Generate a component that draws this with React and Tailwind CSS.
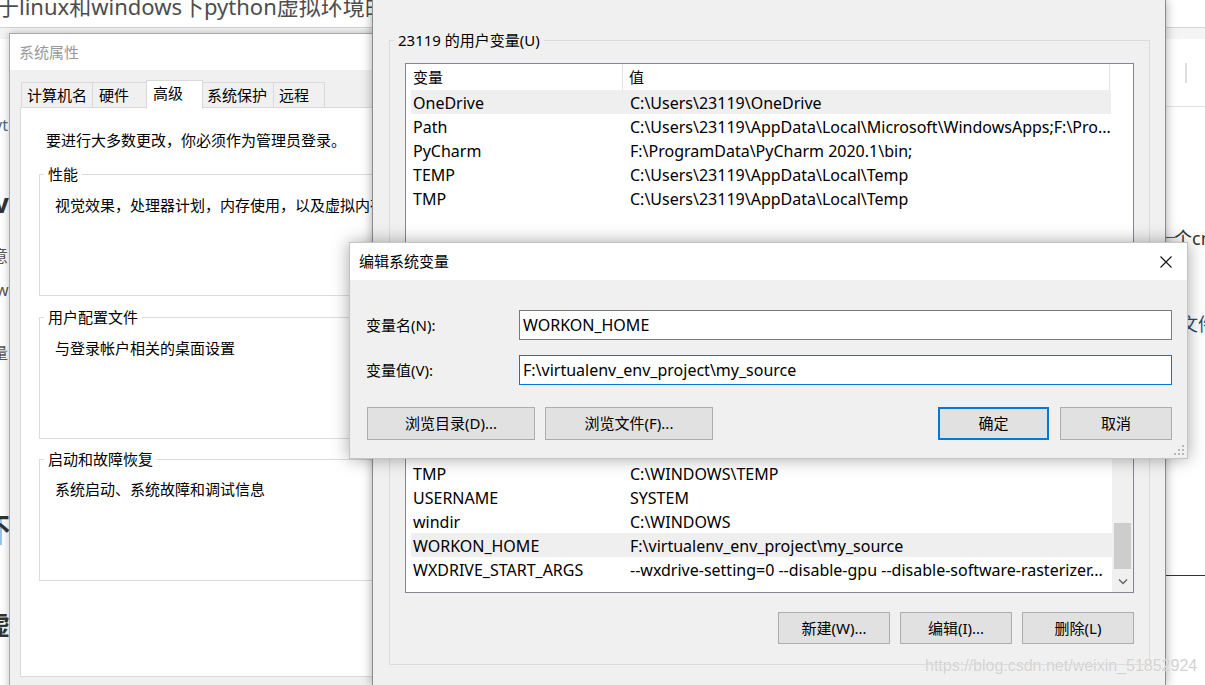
import React from "react";

const userRows = [
  ["OneDrive", "C:\\Users\\23119\\OneDrive", true],
  ["Path", "C:\\Users\\23119\\AppData\\Local\\Microsoft\\WindowsApps;F:\\Pro...", false],
  ["PyCharm", "F:\\ProgramData\\PyCharm 2020.1\\bin;", false],
  ["TEMP", "C:\\Users\\23119\\AppData\\Local\\Temp", false],
  ["TMP", "C:\\Users\\23119\\AppData\\Local\\Temp", false],
];

const sysRows = [
  ["PSModulePath", "%ProgramFiles%\\WindowsPowerShell\\Modules;...", false],
  ["TEMP", "C:\\WINDOWS\\TEMP", false],
  ["TMP", "C:\\WINDOWS\\TEMP", false],
  ["USERNAME", "SYSTEM", false],
  ["windir", "C:\\WINDOWS", false],
  ["WORKON_HOME", "F:\\virtualenv_env_project\\my_source", true],
  ["WXDRIVE_START_ARGS", "--wxdrive-setting=0 --disable-gpu --disable-software-rasterizer...", false],
];

function Row({ name, value, sel }) {
  return (
    <div className={"ml-[5px] flex h-[24px] shrink-0 items-center whitespace-nowrap pt-[2px] text-[16px] " + (sel ? "bg-[#efefef]" : "")}>
      <div className="w-[219px] shrink-0 pl-[2px]">{name}</div>
      <div className="min-w-0 flex-1 overflow-hidden">{value}</div>
    </div>
  );
}

function WinButton({ children, className }) {
  return (
    <div className={"flex h-[32px] items-center justify-center border border-[#adadad] bg-[#e1e1e1] " + className}>
      {children}
    </div>
  );
}

function Group({ label, className, children }) {
  return (
    <fieldset className={"border border-[#dcdcdc] pl-[4px] " + className}>
      <legend className="px-[4px] leading-[20px]">{label}</legend>
      {children}
    </fieldset>
  );
}

function SysProps() {
  const tab = "relative -ml-px flex h-[26px] items-center border border-[#d9d9d9] bg-[#f0f0f0]";
  return (
    <div className="absolute left-[9px] top-[33px] flex h-[670px] w-[400px] flex-col border border-[#a8a8a8] bg-[#f0f0f0] shadow-[0_0_8px_rgba(0,0,0,0.25)]">
      <div className="flex h-[36px] shrink-0 items-center bg-white pl-[9px] text-[#9a9a9a]">系统属性</div>
      <div className="flex shrink-0 items-end pl-[12px] pt-[10px]">
        <div className={tab + " w-[72px] pl-[5px]"}>计算机名</div>
        <div className={tab + " w-[55px] pl-[6px]"}>硬件</div>
        <div className="relative z-10 -mb-px -ml-px flex h-[29px] w-[57px] items-center border border-b-0 border-[#d9d9d9] bg-white pb-[3px] pl-[6px]">高级</div>
        <div className={tab + " w-[72px] pl-[4px]"}>系统保护</div>
        <div className={tab + " w-[52px] pl-[5px]"}>远程</div>
      </div>
      <div className="-mt-px ml-[10px] h-[570px] w-[400px] border border-[#d9d9d9] bg-white pt-[22px]">
        <div className="ml-[25px] leading-[20px]">要进行大多数更改，你必须作为管理员登录。</div>
        <Group label="性能" className="ml-[18px] mt-[14px] h-[132px] w-[420px]">
          <div className="ml-[11px] mt-[11px] whitespace-nowrap leading-[20px]">视觉效果，处理器计划，内存使用，以及虚拟内存</div>
        </Group>
        <Group label="用户配置文件" className="ml-[18px] mt-[11px] h-[132px] w-[420px]">
          <div className="ml-[11px] mt-[11px] leading-[20px]">与登录帐户相关的桌面设置</div>
        </Group>
        <Group label="启动和故障恢复" className="ml-[18px] mt-[10px] h-[132px] w-[420px]">
          <div className="ml-[11px] mt-[10px] leading-[20px]">系统启动、系统故障和调试信息</div>
        </Group>
      </div>
    </div>
  );
}

function EnvWindow() {
  return (
    <div className="absolute left-[372px] top-0 flex h-[685px] w-[794px] flex-col border-x border-[#8c8c8c] bg-[#f0f0f0] pt-[30px] shadow-[0_0_10px_rgba(0,0,0,0.35)]">
      <Group label="23119 的用户变量(U)" className="ml-[16px] h-[260px] w-[761px] shrink-0 pr-[15px]">
        <div className="ml-[11px] mt-[13px] h-[200px] w-[729px] border border-[#828790] bg-white">
          <div className="flex h-[26px] items-center">
            <div className="flex h-full w-[217px] shrink-0 items-center border-r border-[#e5e5e5] pl-[7px]">变量</div>
            <div className="flex h-full w-[487px] items-center border-r border-[#e5e5e5] pl-[6px]">值</div>
          </div>
          <div className="w-[705px]">
            {userRows.map((r, i) => (
              <Row key={i} name={r[0]} value={r[1]} sel={r[2]} />
            ))}
          </div>
        </div>
      </Group>
      <Group label="系统变量(S)" className="ml-[16px] mt-[10px] h-[365px] w-[761px] shrink-0 pr-[15px]">
        <div className="ml-[11px] mt-[3px] flex h-[270px] w-[729px] border border-[#828790] bg-white">
          <div className="flex min-w-0 flex-1 flex-col justify-end overflow-hidden pb-[11px]">
            {sysRows.map((r, i) => (
              <Row key={i} name={r[0]} value={r[1]} sel={r[2]} />
            ))}
          </div>
          <div className="flex w-[21px] shrink-0 flex-col items-center justify-end bg-[#f0f0f0]">
            <div className="mb-[2px] h-[46px] w-[17px] bg-[#cdcdcd]" />
            <div className="flex h-[21px] w-full items-center justify-center">
              <svg width="10" height="7" viewBox="0 0 10 7">
                <path d="M1 1.5 L5 5.5 L9 1.5" fill="none" stroke="#606060" strokeWidth="1.3" />
              </svg>
            </div>
          </div>
        </div>
        <div className="ml-[11px] mt-[19px] flex w-[729px] justify-end gap-[10px]">
          <WinButton className="w-[112px]">新建(W)...</WinButton>
          <WinButton className="w-[112px]">编辑(I)...</WinButton>
          <WinButton className="w-[112px]">删除(L)</WinButton>
        </div>
      </Group>
    </div>
  );
}

function EditDialog() {
  return (
    <div className="absolute left-[349px] top-[242px] flex h-[217px] w-[839px] flex-col border border-[#c4c4c4] bg-[#f0f0f0] shadow-[0_0_16px_rgba(0,0,0,0.35)]">
      <div className="flex h-[37px] shrink-0 items-center justify-between bg-white pl-[9px] pr-[15px]">
        <span>编辑系统变量</span>
        <svg width="12" height="12" viewBox="0 0 12 12">
          <path d="M0.5 0.5 L11.5 11.5 M11.5 0.5 L0.5 11.5" stroke="#111" strokeWidth="1.1" />
        </svg>
      </div>
      <div className="flex flex-col pl-[16px] pr-[15px] pt-[30px]">
        <div className="flex items-center">
          <div className="w-[153px] shrink-0">变量名(N):</div>
          <div className="flex h-[30px] flex-1 items-center border border-[#7a7a7a] bg-white pl-[3px] text-[16px]">WORKON_HOME</div>
        </div>
        <div className="mt-[15px] flex items-center">
          <div className="w-[153px] shrink-0">变量值(V):</div>
          <div className="flex h-[30px] flex-1 items-center border border-[#0078d7] bg-white pl-[3px] text-[16px]">F:\virtualenv_env_project\my_source</div>
        </div>
        <div className="mt-[22px] flex items-center pl-px">
          <div className="flex h-[33px] w-[168px] items-center justify-center border border-[#adadad] bg-[#e1e1e1]">浏览目录(D)...</div>
          <div className="ml-[10px] flex h-[33px] w-[168px] items-center justify-center border border-[#adadad] bg-[#e1e1e1]">浏览文件(F)...</div>
          <div className="ml-auto flex h-[33px] w-[111px] items-center justify-center border-2 border-[#0078d7] bg-[#e1e1e1]">确定</div>
          <div className="ml-[11px] flex h-[33px] w-[112px] items-center justify-center border border-[#adadad] bg-[#e1e1e1]">取消</div>
        </div>
      </div>
      <svg className="absolute bottom-[2px] right-[2px]" width="12" height="12" viewBox="0 0 12 12">
        <rect x="9" y="1" width="2" height="2" fill="#b8b8b8" />
        <rect x="5" y="5" width="2" height="2" fill="#b8b8b8" />
        <rect x="9" y="5" width="2" height="2" fill="#b8b8b8" />
        <rect x="1" y="9" width="2" height="2" fill="#b8b8b8" />
        <rect x="5" y="9" width="2" height="2" fill="#b8b8b8" />
        <rect x="9" y="9" width="2" height="2" fill="#b8b8b8" />
      </svg>
    </div>
  );
}

export default function App() {
  return (
    <div className="relative h-[685px] w-[1205px] overflow-hidden bg-white font-['Noto_Sans','Noto_Sans_CJK_SC',sans-serif] text-[15px] text-black">
      {/* background blog page */}
      <div className="absolute left-[-3px] top-[-5px] whitespace-nowrap text-[22px] leading-[22px] text-[#4d4d4d]">于linux和windows下python虚拟环境的配置</div>
      <div className="absolute left-0 top-[27px] h-[12px] w-full border-t border-[#d4d4d4] bg-[#f4f4f4]" />
      <span className="absolute left-[-6px] top-[113px] text-[16px] text-[#4a6a8c]">yt</span>
      <span className="absolute left-[-6px] top-[184px] text-[26px] font-bold text-[#333]">vi</span>
      <span className="absolute left-[-8px] top-[244px] text-[16px] text-[#555]">意</span>
      <span className="absolute left-[-4px] top-[278px] text-[16px] text-[#555]">w</span>
      <span className="absolute left-[-8px] top-[341px] text-[16px] text-[#555]">量</span>
      <div className="absolute left-0 top-[517px] h-[28px] w-[2px] bg-[#9cc3ef]" />
      <span className="absolute left-[-16px] top-[508px] text-[26px] font-bold text-[#333]">不</span>
      <span className="absolute left-[-16px] top-[606px] text-[26px] font-bold text-[#333]">虚</span>
      <div className="absolute left-[1185px] top-[63px] h-[20px] w-[2px] bg-[#dedede]" />
      <div className="absolute left-[1165px] top-[106px] h-px w-[40px] bg-[#e2e2e2]" />
      <div className="absolute left-[1165px] top-[237px] h-px w-[10px] bg-[#555]" />
      <span className="absolute left-[1174px] top-[225px] whitespace-nowrap text-[18px] text-[#333]">个cn</span>
      <span className="absolute left-[1180px] top-[311px] whitespace-nowrap text-[18px] text-[#2f4a6e]">文件</span>
      <div className="absolute left-[1165px] top-[575px] h-px w-[40px] bg-[#333]" />

      <SysProps />
      <EnvWindow />
      <EditDialog />

      <div className="pointer-events-none absolute left-[925px] top-[654px] whitespace-nowrap font-['Liberation_Sans',sans-serif] text-[16px] text-[#d2d2d2] [text-shadow:0_0_1px_#fff]">https://blog.csdn.net/weixin_51852924</div>
    </div>
  );
}
